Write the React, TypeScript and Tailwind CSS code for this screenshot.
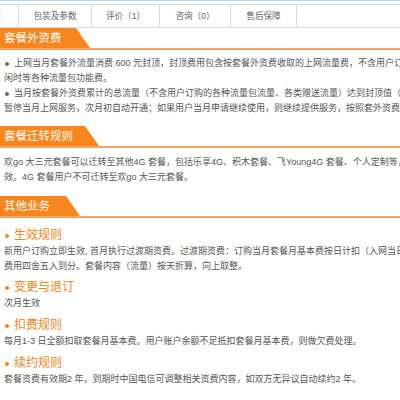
const tabs = [
  { label: '包装及参数', w: 'w-[73px]' },
  { label: '评价（1）', w: 'w-[68px]' },
  { label: '咨询（0）', w: 'w-[71px]' },
  { label: '售后保障', w: 'w-[66px]' },
]

function SectionHeader({ title, width }: { title: string; width: string }) {
  return (
    <div className="border-b-2 border-[#f5a466]">
      <div
        className={`${width} h-[20px] bg-[#f7861d] text-white text-[11.5px] leading-[20px] pl-[4px] [clip-path:polygon(0_0,calc(100%_-_14px)_0,100%_100%,0_100%)]`}
      >
        {title}
      </div>
    </div>
  )
}

function Dot({ orange }: { orange?: boolean }) {
  return (
    <span
      className={`inline-block w-[4px] h-[4px] rounded-full ml-[1px] mr-[5px] align-middle ${
        orange ? 'bg-[#f08519]' : 'bg-[#666]'
      }`}
    />
  )
}

function SubTitle({ title }: { title: string }) {
  return (
    <div className="text-[12px] leading-[18px] text-[#f08519] whitespace-nowrap">
      <Dot orange />
      {title}
    </div>
  )
}

function Line({ children }: { children: React.ReactNode }) {
  return <p className="whitespace-nowrap">{children}</p>
}

export default function App() {
  return (
    <div className="w-[400px] h-[400px] overflow-hidden bg-white [font-family:'Liberation_Sans','Noto_Sans_CJK_SC',sans-serif]">
      <div className="w-[640px]">
        <div className="h-[1px] bg-[#b8d6f0]" />
        <div className="h-[3px]" />

        {/* tabs */}
        <div className="flex h-[24px] border-y border-[#d9d9d9] text-[8.6px] text-[#666]">
          <div className="w-[69px] -ml-[50px] shrink-0 flex items-center justify-center border-r border-[#d9d9d9] text-[#f08519]">
            商品详情
          </div>
          {tabs.map(t => (
            <div
              key={t.label}
              className={`${t.w} shrink-0 flex items-center justify-center border-r border-[#d9d9d9]`}
            >
              {t.label}
            </div>
          ))}
          <div className="flex-1" />
        </div>

        <div className="text-[9px] leading-[15px] text-[#555]">
          <SectionHeader title="套餐外资费" width="w-[90px]" />
          <div className="pt-[6px] pl-[4px]">
            <Line>
              <Dot />
              上网当月套餐外流量消费 600 元封顶，封顶费用包含按套餐外资费收取的上网流量费，不含用户订购的各类流量包、夜间
            </Line>
            <Line>闲时等各种流量包功能费。</Line>
            <Line>
              <Dot />
              当月按套餐外资费累计的总流量（不含用户订购的各种流量包流量、各类赠送流量）达到封顶值（15GB）后，
            </Line>
            <Line>暂停当月上网服务，次月初自动开通；如果用户当月申请继续使用，则继续提供服务，按照套外资费收费。</Line>
          </div>

          <div className="mt-[10px]">
            <SectionHeader title="套餐迁转规则" width="w-[99px]" />
          </div>
          <div className="pt-[7px] pl-[4px]">
            <Line>欢go 大三元套餐可以迁转至其他4G 套餐，包括乐享4G、积木套餐、飞Young4G 套餐、个人定制等，次月生</Line>
            <Line>效。4G 套餐用户不可迁转至欢go 大三元套餐。</Line>
          </div>

          <div className="mt-[11px]">
            <SectionHeader title="其他业务" width="w-[80px]" />
          </div>
          <div className="pt-[8px] pl-[4px]">
            <SubTitle title="生效规则" />
            <Line>新用户订购立即生效, 首月执行过渡期资费。过渡期资费：订购当月套餐月基本费按日计扣（入网当日到月底），</Line>
            <Line>费用四舍五入到分。套餐内容（流量）按天折算，向上取整。</Line>

            <div className="mt-[4px]">
              <SubTitle title="变更与退订" />
            </div>
            <Line>次月生效</Line>

            <div className="mt-[5px]">
              <SubTitle title="扣费规则" />
            </div>
            <Line>每月1-3 日全额扣取套餐月基本费。用户账户余额不足抵扣套餐月基本费，则做欠费处理。</Line>

            <div className="mt-[5px]">
              <SubTitle title="续约规则" />
            </div>
            <Line>套餐资费有效期2 年，到期时中国电信可调整相关资费内容，如双方无异议自动续约2 年。</Line>
          </div>
        </div>
      </div>
    </div>
  )
}
